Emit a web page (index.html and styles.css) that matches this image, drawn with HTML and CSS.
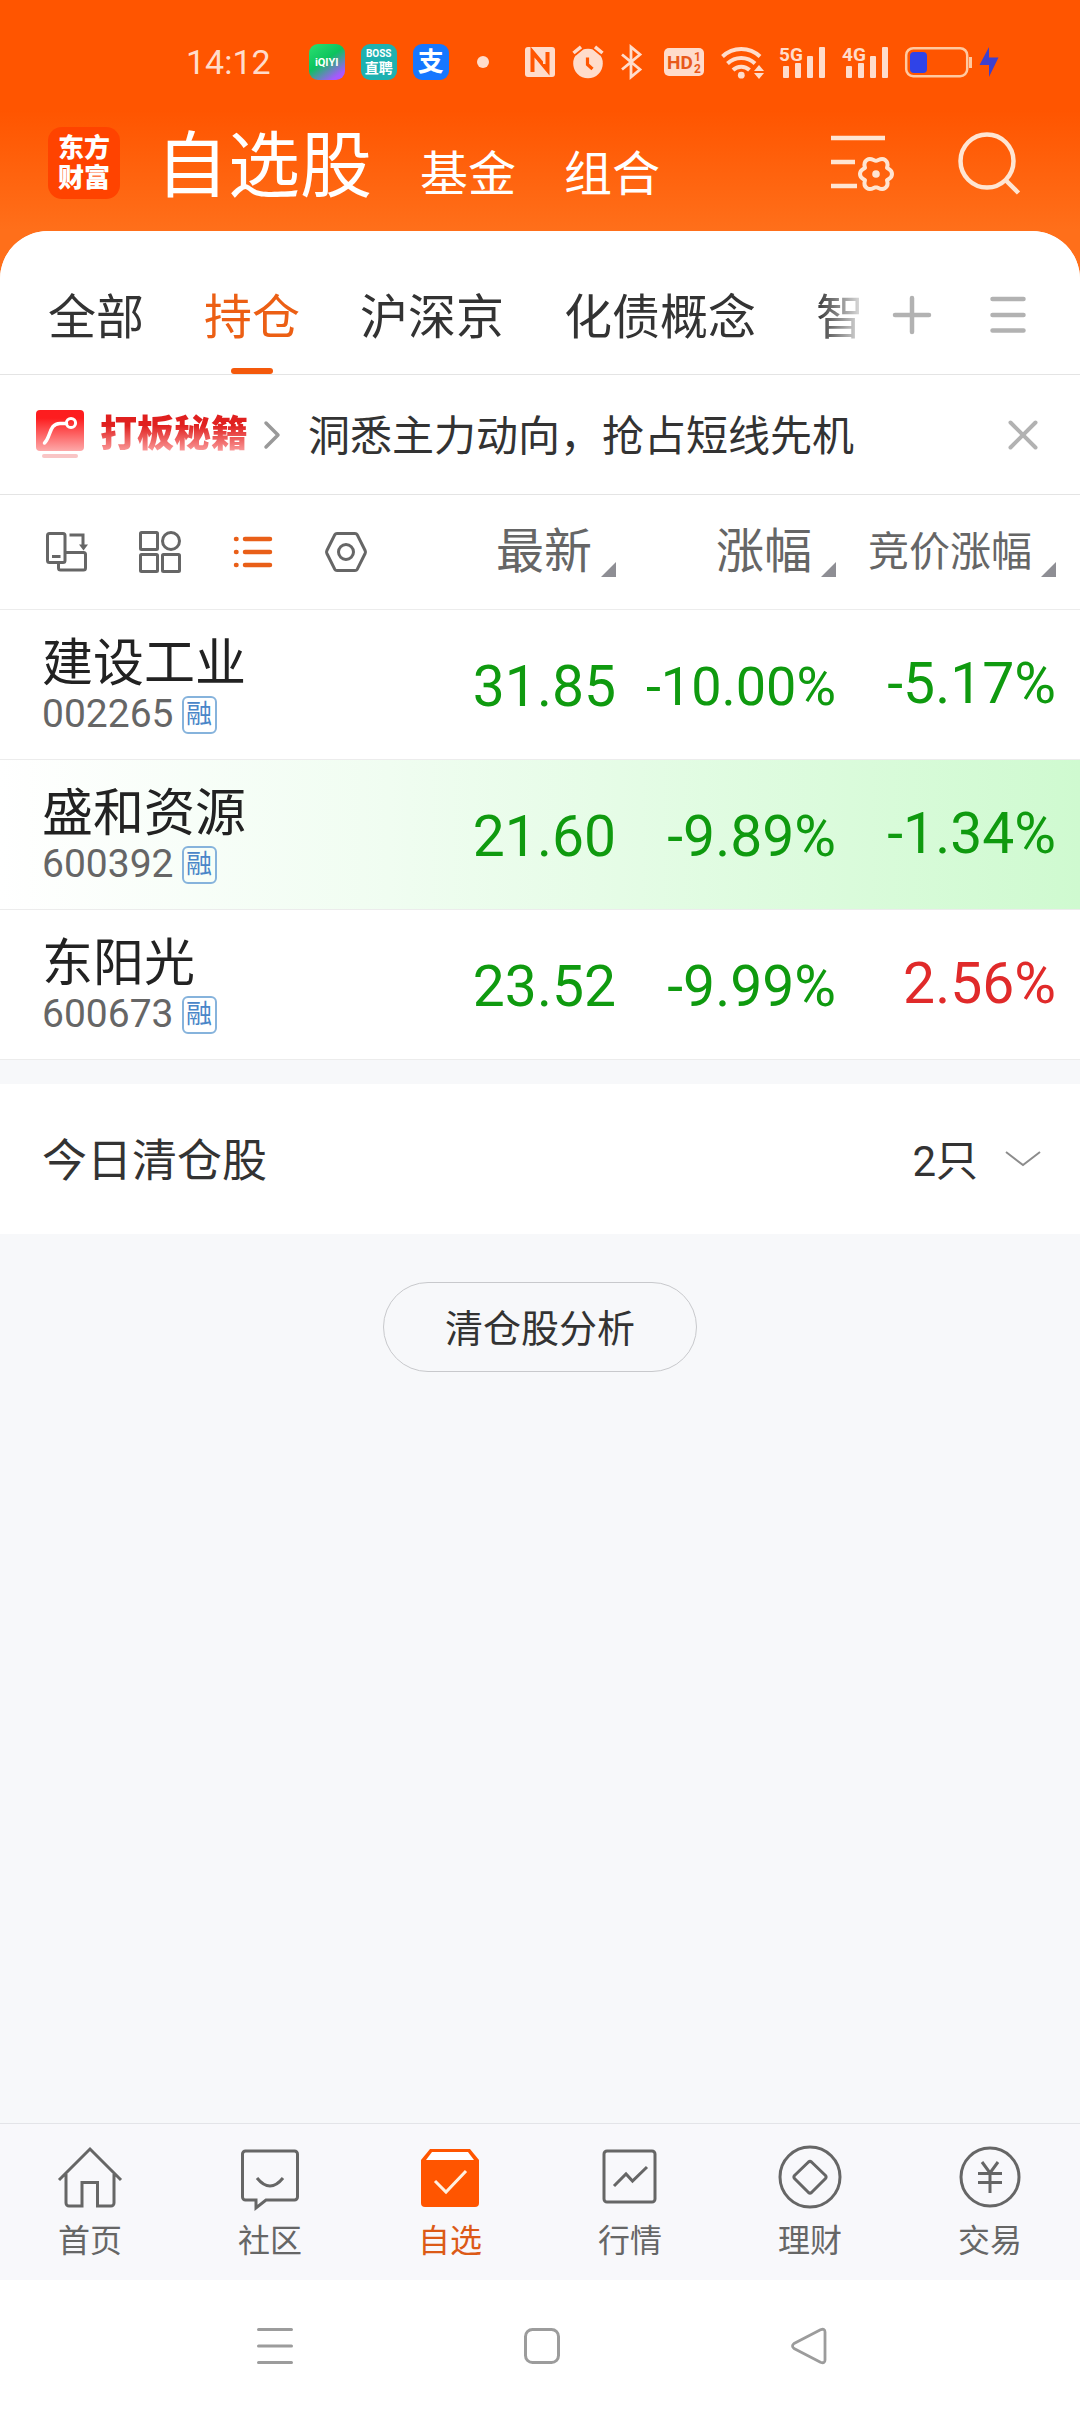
FILE: index.html
```html
<!DOCTYPE html>
<html lang="zh-CN">
<head>
<meta charset="utf-8">
<meta name="viewport" content="width=device-width, initial-scale=1">
<title>自选股</title>
<link rel="stylesheet" href="styles.css">
</head>
<body>
<div class="app">
  <div class="status">
    <time class="status-time">14:12</time>
    <div class="status-apps">
      <span class="app-chip app-iqiyi">iQIYI</span>
      <span class="app-chip app-boss"><span>BOSS</span><span class="app-boss-cn">直聘</span></span>
      <span class="app-chip app-alipay">支</span>
    </div>
    <span class="status-dot"></span>
    <div class="status-icons">
      <svg width="30" height="34" viewBox="0 0 30 34"><rect y="2" width="30" height="30" rx="3" fill="#ffdccb"/><path d="M7.500 27V7L22.500 25V7" fill="none" stroke="#ff5500" stroke-width="4"/><path d="M11 27V15M19 7v12" stroke="#ffdccb" stroke-width="2"/></svg>
      <svg width="32" height="34" viewBox="0 0 32 34"><circle cx="16" cy="18.500" r="14.800" fill="#ffdccb"/><path d="M1.500 8L9 1.800M30.500 8L23 1.800" stroke="#ff5500" stroke-width="7"/><path d="M1.500 8L9 1.800M30.500 8L23 1.800" stroke="#ffdccb" stroke-width="3.500"/><path d="M15.500 12.500v7l5 4.500" fill="none" stroke="#ff5500" stroke-width="3.200"/></svg>
      <svg width="26" height="34" viewBox="0 0 26 34"><path d="M1 9.500l18 15L10 32V2l9 7.500-18 15" fill="none" stroke="#ffdccb" stroke-width="2.800"/></svg>
      <svg width="40" height="34" viewBox="0 0 40 34"><rect y="3" width="40" height="28" rx="5" fill="#ffdccb"/><g class="svg-bold" fill="#e8591a"><text x="3" y="24" font-size="19">HD</text><text x="30" y="16" font-size="12">1</text><text x="30" y="28" font-size="12">2</text></g></svg>
      <svg width="41" height="34" viewBox="0 0 41 34"><g fill="none" stroke="#ffdccb" stroke-width="4"><path d="M1.500 11.500a27 27 0 0 1 37.500 0"/><path d="M6.500 18.500a20 20 0 0 1 27.500 0"/><path d="M12 25a12 12 0 0 1 16.500 0"/></g><circle cx="20.300" cy="30.200" r="3.400" fill="#ffdccb"/><path d="M33 26l5-6 5 6zM33 28h10l-5 6z" fill="#ffdccb"/></svg>
      <svg width="46" height="34" viewBox="0 0 46 34"><text class="svg-bold" x="0" y="16" font-size="19" fill="#ffdccb">5G</text><g fill="#ffdccb"><rect x="4" y="21" width="6" height="12" rx="1"/><rect x="16" y="18" width="6" height="15" rx="1"/><rect x="28" y="11" width="6" height="22" rx="1"/><rect x="40" y="2" width="6" height="31" rx="1"/></g></svg>
      <svg width="46" height="34" viewBox="0 0 46 34"><text class="svg-bold" x="0" y="16" font-size="19" fill="#ffdccb">4G</text><g fill="#ffdccb"><rect x="4" y="21" width="6" height="12" rx="1"/><rect x="16" y="18" width="6" height="15" rx="1"/><rect x="28" y="11" width="6" height="22" rx="1"/><rect x="40" y="2" width="6" height="31" rx="1"/></g></svg>
      <svg width="94" height="34" viewBox="0 0 94 34"><rect x="1.200" y="3.200" width="61" height="28" rx="7" fill="none" stroke="#ffc9a0" stroke-width="2.500"/><rect x="5" y="7" width="17" height="21" rx="4" fill="#2f43e8"/><path d="M65.500 12v11" stroke="#ffc9a0" stroke-width="3"/><path d="M84 2L74.500 20H84v12l9.500-19.500H84z" fill="#3d40cf"/></svg>
    </div>
  </div>

  <header class="header">
    <a class="logo" href="#" aria-label="东方财富"><span>东方</span><span>财富</span></a>
    <nav class="titles">
      <a class="title title-main" href="#">自选股</a>
      <a class="title" href="#">基金</a>
      <a class="title" href="#">组合</a>
    </nav>
    <div class="header-actions">
      <button class="icon-btn" aria-label="设置">
        <svg width="64" height="56" viewBox="0 0 64 56" fill="none" stroke="#ffe5d2" stroke-width="4.500"><path d="M1 3h54M1 27h24M1 51h26"/><path stroke-width="4" stroke-linejoin="round" transform="translate(46 39)" d="M11 -6.300C12 -5 16 -4.500 16 0S12 5 11 6.300C11.500 8 13 11.500 9 14.200S2 13 0 13.200C-2 13 -5 17 -9 14.200S-11.500 8 -11 6.300C-12 5 -16 4.500 -16 0S-12 -5 -11 -6.300C-11.500 -8 -13 -11.500 -9 -14.200S-2 -13 0 -13.200C2 -13 5 -17 9 -14.200S11.500 -8 11 -6.300z"/><circle cx="46" cy="39" r="3.800" fill="#ffe5d2" stroke="none"/></svg>
      </button>
      <button class="icon-btn" aria-label="搜索">
        <svg width="62" height="62" viewBox="0 0 62 62" fill="none" stroke="#ffe5d2" stroke-width="4.500"><circle cx="29" cy="29" r="26.500"/><path d="M47.500 48L60.500 61"/></svg>
      </button>
    </div>
  </header>

  <main class="main">
    <div class="tabs">
      <div class="tab-list" role="tablist">
        <button class="tab" role="tab">全部</button>
        <button class="tab tab-active" role="tab" aria-selected="true">持仓</button>
        <button class="tab" role="tab">沪深京</button>
        <button class="tab" role="tab">化债概念</button>
        <button class="tab" role="tab">智</button>
      </div>
      <div class="tab-tools">
        <button class="icon-btn" aria-label="添加"><svg width="40" height="40" viewBox="0 0 40 40" stroke="#b2b2b2" stroke-width="4.500" stroke-linecap="round"><path d="M20 3v34M3 20h34"/></svg></button>
        <button class="icon-btn" aria-label="分组"><svg width="40" height="40" viewBox="0 0 40 40" stroke="#b2b2b2" stroke-width="4.500" stroke-linecap="round"><path d="M4.500 4h31M4.500 20h31M4.500 35.500h31"/></svg></button>
      </div>
    </div>

    <div class="banner">
      <a class="banner-link" href="#">
        <svg class="banner-icon" width="48" height="50" viewBox="0 0 48 50"><defs><linearGradient id="red" x1="0" y1="0" x2="0" y2="1"><stop offset=".2" stop-color="#fd1d1f"/><stop offset="1" stop-color="#fda9a9"/></linearGradient></defs><rect width="48" height="41" rx="4" fill="url(#red)"/><rect x="6" y="44" width="36" height="4" rx="2" fill="#f9c5c5"/><g fill="none" stroke="#fff" stroke-width="3.500" stroke-linecap="round"><path d="M8.500 33C15 27 13 13.500 24 13.500h6.500"/><circle cx="35" cy="13" r="4.600" stroke-width="3"/></g></svg>
        <span class="banner-name">打板秘籍</span>
        <svg width="16" height="28" viewBox="0 0 16 28" fill="none" stroke="#999" stroke-width="3.500" stroke-linecap="round" stroke-linejoin="round"><path d="M2 2l12 12L2 26"/></svg>
        <span class="banner-text">洞悉主力动向，抢占短线先机</span>
      </a>
      <button class="icon-btn" aria-label="关闭"><svg width="30" height="30" viewBox="0 0 30 30" stroke="#b2b2b2" stroke-width="4" stroke-linecap="round"><path d="M2.500 2.500l25 25M27.500 2.500l-25 25"/></svg></button>
    </div>

    <table class="quotes">
      <colgroup><col><col class="col-num"><col class="col-num"><col class="col-num"></colgroup>
      <thead>
        <tr>
          <th>
            <div class="view-tools">
              <button class="icon-btn" aria-label="横屏"><svg width="42" height="42" viewBox="0 0 42 42" fill="none" stroke="#666" stroke-width="3"><rect x="1.500" y="2.500" width="17.500" height="29" rx="2"/><path d="M6 25.500h8.500M20 21.500h17.500a2 2 0 0 1 2 2V37a2 2 0 0 1-2 2H14.500a2 2 0 0 1-2-2v-5M23.500 4H37v12"/><path d="M33 13.500h9l-4.500 6z" fill="#666" stroke="none"/></svg></button>
              <button class="icon-btn" aria-label="宫格"><svg width="42" height="42" viewBox="0 0 42 42" fill="none" stroke="#666" stroke-width="3"><rect x="1.500" y="1.500" width="17" height="17" rx="1"/><circle cx="32" cy="10" r="8.500"/><rect x="1.500" y="23.500" width="17" height="17" rx="1"/><rect x="23.500" y="23.500" width="17" height="17" rx="1"/></svg></button>
              <button class="icon-btn" aria-label="列表"><svg width="42" height="42" viewBox="0 0 42 42" fill="none" stroke="#e95f18" stroke-width="4.500" stroke-linecap="round"><path d="M4 8h.500M4 21h.500M4 34h.500M13 8h25M13 21h25M13 34h25"/></svg></button>
              <button class="icon-btn" aria-label="列设置"><svg width="42" height="42" viewBox="0 0 42 42" fill="none" stroke="#666" stroke-width="3"><path stroke-linejoin="round" d="M12 2.500h18q1.500 0 2.300 1.300l7.800 15.700q.700 1.500 0 3l-7.800 15.700q-.800 1.300-2.300 1.300H12q-1.500 0-2.300-1.300L1.900 22.500q-.700-1.500 0-3L9.700 3.800Q10.500 2.500 12 2.500z"/><circle cx="21" cy="21" r="7.500"/></svg></button>
            </div>
          </th>
          <th><button class="sort">最新</button></th>
          <th><button class="sort">涨幅</button></th>
          <th><button class="sort sort-long">竞价涨幅</button></th>
        </tr>
      </thead>
      <tbody>
        <tr>
          <td><div class="name">建设工业</div><div class="code">002265<span class="badge">融</span></div></td>
          <td class="num">31.85</td><td class="num num-long">-10.00%</td><td class="num num-auction">-5.17%</td>
        </tr>
        <tr class="flash">
          <td><div class="name">盛和资源</div><div class="code">600392<span class="badge">融</span></div></td>
          <td class="num">21.60</td><td class="num">-9.89%</td><td class="num num-auction">-1.34%</td>
        </tr>
        <tr>
          <td><div class="name">东阳光</div><div class="code">600673<span class="badge">融</span></div></td>
          <td class="num">23.52</td><td class="num">-9.99%</td><td class="num num-auction num-up">2.56%</td>
        </tr>
      </tbody>
    </table>

    <button class="cleared">
      <span class="cleared-title">今日清仓股</span>
      <span class="cleared-count">2只</span>
      <svg width="36" height="16" viewBox="0 0 36 16" fill="none" stroke="#8c8c8c" stroke-width="2"><path d="M1 1l17 13L35 1"/></svg>
    </button>

    <div class="analysis"><button class="analysis-btn">清仓股分析</button></div>
  </main>

  <nav class="tabbar">
    <a class="tabbar-item" href="#"><svg width="66" height="66" viewBox="0 0 66 66"><path d="M2 36L33 5l31 31M9 30v29a3 3 0 0 0 3 3h13V38.500h15.500V62H54a3 3 0 0 0 3-3V30"/></svg><span>首页</span></a>
    <a class="tabbar-item" href="#"><svg width="66" height="66" viewBox="0 0 66 66"><path d="M8.500 7h49a3 3 0 0 1 3 3v43a3 3 0 0 1-3 3H29l-10 8v-8H8.500a3 3 0 0 1-3-3V10a3 3 0 0 1 3-3z"/><path d="M20 34q13 16 26 0"/></svg><span>社区</span></a>
    <a class="tabbar-item tabbar-active" href="#"><svg width="66" height="66" viewBox="0 0 66 66"><path d="M4 16l9-11h40l9 11v43a4 4 0 0 1-4 4H8a4 4 0 0 1-4-4z" fill="#ff5500" stroke="none"/><path d="M15 8h36l6 8H9z" fill="#fff" stroke="none"/><path d="M18 37l11 11 20-21" stroke="#fff0e0"/></svg><span>自选</span></a>
    <a class="tabbar-item" href="#"><svg width="66" height="66" viewBox="0 0 66 66"><rect x="7" y="7" width="51" height="51" rx="3"/><path d="M17 42l12-12 6.500 7L50 23"/></svg><span>行情</span></a>
    <a class="tabbar-item" href="#"><svg width="66" height="66" viewBox="0 0 66 66"><circle cx="33" cy="33" r="30"/><path stroke-linejoin="round" d="M31.500 18q1.500-1.200 3 0L48.500 31.500q1.200 1.500 0 3L34.500 48.500q-1.500 1.200-3 0L17.500 34.500q-1.200-1.500 0-3z"/></svg><span>理财</span></a>
    <a class="tabbar-item" href="#"><svg width="66" height="66" viewBox="0 0 66 66"><circle cx="33" cy="33" r="29"/><path d="M25 18l8 11 8-11M21 29.500h24M21 38.500h24M33 29v20"/></svg><span>交易</span></a>
  </nav>

  <div class="sysbar">
    <button class="icon-btn" aria-label="最近任务"><svg width="36" height="38" viewBox="0 0 36 38" stroke="#9c9c9c" stroke-width="3" stroke-linecap="round"><path d="M1.500 2.500h33M1.500 19h33M1.500 35.500h33"/></svg></button>
    <button class="icon-btn" aria-label="主屏幕"><svg width="38" height="38" viewBox="0 0 38 38" fill="none" stroke="#9c9c9c" stroke-width="3"><rect x="2.500" y="2.500" width="33" height="33" rx="7"/></svg></button>
    <button class="icon-btn" aria-label="返回"><svg width="36" height="38" viewBox="0 0 36 38" fill="none" stroke="#9c9c9c" stroke-width="2.800" stroke-linejoin="round"><path d="M29.500 2.800Q34 1 34 5v28q0 4-4.500 2.200L3 21.500q-3-2.500 0-5z"/></svg></button>
  </div>
</div>
</body>
</html>
```
FILE: styles.css
```css
* {
  box-sizing: border-box;
}

body {
  margin: 0;
  font-family: Roboto, "Noto Sans CJK SC", sans-serif;
  color: #333;
}

a {
  color: inherit;
  text-decoration: none;
}

button {
  padding: 0;
  border: 0;
  background: none;
  color: inherit;
  font: inherit;
}

svg {
  display: block;
  flex: none;
  overflow: visible;
}

.app {
  display: flex;
  flex-direction: column;
  min-height: 100vh;
  background: linear-gradient(#ff5500 110px, #ff6f1a 230px) no-repeat top / 100% 300px;
}

.icon-btn {
  display: flex;
  align-items: center;
  justify-content: center;
}

/* Status bar */

.status {
  display: flex;
  align-items: center;
  height: 95px;
  padding: 29px 81px 0 186px;
  color: #ffdccb;
}

.status-time {
  font-size: 34px;
}

.status-apps {
  display: flex;
  gap: 16px;
  margin-left: 38px;
}

.app-chip {
  display: flex;
  flex-direction: column;
  align-items: center;
  justify-content: center;
  width: 36px;
  height: 36px;
  border-radius: 9px;
  color: #fff;
  font-weight: 700;
}

.app-iqiyi {
  background: linear-gradient(145deg, #2be070, #0cc35e 45%, #a858ff 85%);
  font-size: 11px;
}

.app-boss {
  background: #1eb1b0;
  font-size: 10px;
  line-height: 12px;
}

.app-boss-cn {
  font-size: 14px;
  line-height: 16px;
}

.app-alipay {
  background: #1677ff;
  font-size: 26px;
  line-height: 36px;
}

.status-dot {
  width: 12px;
  height: 12px;
  margin-left: 28px;
  border-radius: 50%;
  background: #ffdccb;
}

.status-icons {
  display: flex;
  gap: 17px;
  margin-left: auto;
}

.svg-bold {
  font-weight: 700;
}

/* Header */

.header {
  display: flex;
  align-items: center;
  height: 136px;
  padding: 0 60px 0 48px;
  color: #fff;
}

.logo {
  display: flex;
  flex-direction: column;
  align-items: center;
  justify-content: center;
  width: 72px;
  height: 72px;
  border-radius: 14px;
  background: #ff4300;
  font-size: 26px;
  font-weight: 900;
  line-height: 30px;
}

.titles {
  display: flex;
  flex: 1;
  align-items: baseline;
  gap: 48px;
  margin-left: 36px;
  padding-top: 15px;
}

.title {
  font-size: 48px;
  line-height: 80px;
}

.title-main {
  font-size: 72px;
}

.header-actions {
  display: flex;
  align-items: center;
  gap: 64px;
}

/* Group tabs */

.main {
  flex: 1;
  border-radius: 48px 48px 0 0;
  background: #f7f8fa;
}

.tabs {
  display: flex;
  gap: 28px;
  height: 144px;
  padding: 0 52px 0 48px;
  border-bottom: 1px solid #e4e4e4;
  border-radius: 48px 48px 0 0;
  background: #fff;
}

.tab-list {
  display: flex;
  flex: 1;
  gap: 60px;
  min-width: 0;
  overflow: hidden;
  mask-image: linear-gradient(to right, #000 calc(100% - 48px), rgb(0 0 0 / 10%));
}

.tab {
  position: relative;
  flex: none;
  padding-top: 20px;
  font-size: 48px;
}

.tab-active {
  color: #ec5f14;
}

.tab-active::after {
  content: "";
  position: absolute;
  bottom: 0;
  left: 50%;
  width: 42px;
  height: 6px;
  margin-left: -21px;
  border-radius: 3px;
  background: #f4590c;
}

.tab-tools {
  display: flex;
  gap: 56px;
  padding-top: 24px;
}

/* Promotion strip */

.banner {
  display: flex;
  align-items: center;
  justify-content: space-between;
  height: 120px;
  padding: 0 42px 0 36px;
  border-bottom: 1px solid #e4e4e4;
  background: #fff;
}

.banner-link {
  display: flex;
  align-items: center;
  gap: 16px;
}

.banner-name {
  background: linear-gradient(#e0201f 30%, #fb9d9d 85%);
  background-clip: text;
  color: transparent;
  font-size: 37px;
  font-weight: 900;
  line-height: 48px;
}

.banner-text {
  margin-left: 12px;
  padding-bottom: 5px;
  font-size: 42px;
}

/* Quote table */

.quotes {
  width: 100%;
  table-layout: fixed;
  border-spacing: 0;
  background: #fff;
}

.col-num {
  width: 220px;
}

.quotes th,
.quotes td {
  padding: 0;
  border-bottom: 1px solid #ececec;
}

.quotes th {
  height: 115px;
  color: #666;
  font-weight: 400;
}

.quotes td {
  height: 150px;
  padding-top: 4px;
}

.quotes th:first-child,
.quotes td:first-child {
  padding-left: 42px;
}

.quotes tr > :last-child {
  padding-right: 24px;
}

.quotes col:last-child {
  width: 244px;
}

.view-tools {
  display: flex;
  gap: 51px;
  padding-left: 4px;
}

.sort {
  display: flex;
  align-items: center;
  gap: 9px;
  margin-left: auto;
  font-size: 48px;
  line-height: 60px;
}

.sort-long {
  font-size: 41px;
}

.sort::after {
  content: "";
  align-self: flex-end;
  width: 15px;
  height: 15px;
  margin-bottom: 5px;
  background: #8e8e94;
  clip-path: polygon(100% 0, 100% 100%, 0 100%);
}

.name {
  color: #222;
  font-size: 51px;
  line-height: 56px;
}

.code {
  display: flex;
  align-items: center;
  gap: 8px;
  color: #666;
  font-size: 39px;
  line-height: 45px;
}

.badge {
  display: flex;
  align-items: center;
  justify-content: center;
  width: 35px;
  height: 38px;
  border: 2px solid #86b3dc;
  border-radius: 6px;
  color: #4a86c8;
  font-size: 26px;
}

.num {
  color: #0f9a0f;
  font-size: 57px;
  line-height: 68px;
  text-align: right;
}

.num-long {
  font-size: 54px;
}

.quotes .num-auction {
  padding-bottom: 6px;
}

.num-up {
  color: #e02a2a;
}

.flash {
  background: linear-gradient(to right, #fff, #f0fdf1 36%, #cffad0);
}

/* Cleared positions */

.cleared {
  display: flex;
  align-items: center;
  width: 100%;
  height: 150px;
  margin-top: 24px;
  padding: 0 39px 0 42px;
  background: #fff;
}

.cleared-title,
.cleared-count {
  padding-bottom: 3px;
}

.cleared-title {
  font-size: 45px;
}

.cleared-count {
  margin: 0 27px 0 auto;
  font-size: 42px;
}

.analysis {
  display: flex;
  justify-content: center;
  padding: 48px 0;
}

.analysis-btn {
  height: 90px;
  padding: 0 61px 3px;
  border: 1px solid #c8c9cc;
  border-radius: 45px;
  font-size: 38px;
}

/* Bottom navigation */

.tabbar {
  display: grid;
  grid-template-columns: repeat(6, 1fr);
  height: 157px;
  padding-top: 20px;
  border-top: 1px solid #e3e4e8;
  background: #f8f8fb;
  color: #666;
}

.tabbar-item {
  display: flex;
  flex-direction: column;
  align-items: center;
  gap: 9px;
  font-size: 32px;
  line-height: 44px;
}

.tabbar-item svg {
  fill: none;
  stroke: #666;
  stroke-width: 3;
}

.tabbar-active {
  color: #dc5a17;
}

.sysbar {
  display: grid;
  grid-template-columns: repeat(3, 1fr);
  height: 132px;
  padding: 0 138px 0 142px;
  background: #fff;
}
```
